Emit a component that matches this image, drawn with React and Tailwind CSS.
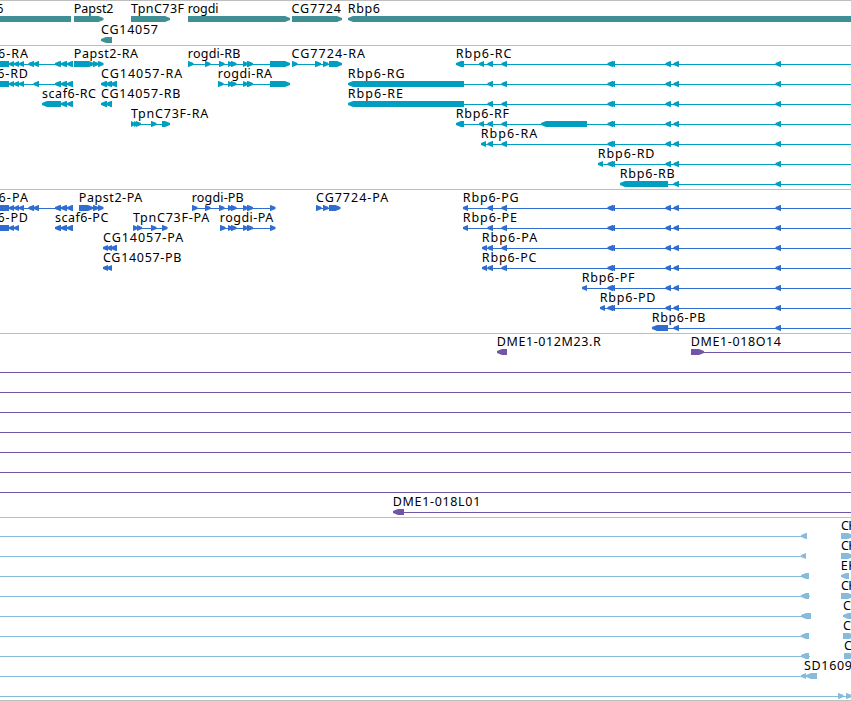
const GENE = "#3f8f95";
const TRANSCRIPT = "#009fc1";
const PROTEIN = "#2f6dd0";
const BAC = "#7355a7";
const CDNA = "#87bbdc";

const L = "left";
const R = "right";

// exons shared by the long Rbp6 isoforms, 3' to 5'
const RBP6_FAR = [[775.5, 781]];
const RBP6_DISTAL = [[673.5, 679], ...RBP6_FAR];
const RBP6_MID = [[607.5, 613], [609.5, 615], [665.5, 671], ...RBP6_DISTAL];
const RBP6_CORE = [[487.5, 493], [501.5, 507], ...RBP6_MID];
const ROGDI = [[228, 233], [231, 236.5], [243, 248], [247, 253]];
const SCAF6_END = [[55, 61], [61, 67], [67, 73]];

/* ================= TRACK DATA ================= */
// feature: name, label x, label end, direction, exons, [line start, line end]
const f = (name, x, end, dir, exons, line) => ({ name, x, end, dir, exons, line });

const tracks = [
  {
    id: "gene",
    color: GENE,
    height: "h-[45px]",
    pitch: 21,
    rows: [
      [
        f("scaf6", -31, 3.5, null, [[-10, 71]]),
        f("Papst2", 73.8, 113.5, R, [[74, 103.5]]),
        f("TpnC73F", 131, 184, R, [[131, 170]]),
        f("rogdi", 187.8, 218.5, R, [[188, 290]]),
        f("CG7724", 291.5, 341, R, [[292, 342]]),
        f("Rbp6", 347.8, 380, L, [[348, 870]]),
      ],
      [f("CG14057", 101, 158, L, [[101, 112]])],
    ],
  },
  {
    id: "transcript",
    color: TRANSCRIPT,
    height: "h-[144px]",
    pitch: 20,
    rows: [
      [
        f("scaf6-RA", -29.5, 28, L, [[-10, 9], [9, 14], [14, 19], [19, 24], [28.5, 34], [33.5, 39], ...SCAF6_END], [0, 73]),
        f("Papst2-RA", 73.8, 138, R, [[74, 94], [93, 98.5], [98, 103.5]], [74, 103]),
        f("rogdi-RB", 187.8, 240.5, R, [[188, 193.5], [205, 210.5], [219, 224.5], ...ROGDI, [270, 290]], [188, 290]),
        f("CG7724-RA", 291.5, 365, R, [[292, 297.5], [315, 321], [323, 328.5], [329, 342]], [292, 342]),
        f("Rbp6-RC", 455.8, 511.5, L, [[456, 464], [479, 484], ...RBP6_CORE], [456, 851]),
      ],
      [
        f("scaf6-RD", -29.5, 28, L, [[-10, 9], [9, 14], [14, 19], [19, 24], [33.5, 39], ...SCAF6_END], [0, 73]),
        f("CG14057-RA", 101, 182.3, L, [[101, 107], [106, 112], [111, 117]]),
        f("rogdi-RA", 217.8, 272, R, [[218, 223.5], ...ROGDI, [270, 290]], [218, 290]),
        f("Rbp6-RG", 347.8, 404.5, L, [[348, 464], ...RBP6_CORE], [464, 851]),
      ],
      [
        f("scaf6-RC", 42, 96, L, [[42, 61], [61, 67], [67, 73]]),
        f("CG14057-RB", 101, 180.5, L, [[101, 107], [106, 112]]),
        f("Rbp6-RE", 347.8, 403, L, [[348, 464], ...RBP6_CORE], [464, 851]),
      ],
      [
        f("TpnC73F-RA", 131, 208.2, R, [[131, 135], [134, 138], [136, 141], [151, 156.5], [162, 170]], [131, 170]),
        f("Rbp6-RF", 455.8, 509, L, [[456, 464], [479, 484], [541, 587], ...RBP6_CORE], [456, 851]),
      ],
      [f("Rbp6-RA", 480.8, 537.2, L, [[481, 486], ...RBP6_CORE], [481, 851])],
      [f("Rbp6-RD", 597.8, 654.5, L, [[598, 603], ...RBP6_MID], [598, 851])],
      [f("Rbp6-RB", 619.8, 674.7, L, [[620, 668], ...RBP6_DISTAL], [620, 851])],
    ],
  },
  {
    id: "protein",
    color: PROTEIN,
    height: "h-[144px]",
    pitch: 20,
    rows: [
      [
        f("scaf6-PA", -29.5, 28, L, [[-10, 9], [9, 14], [14, 19], [19, 24], [28.5, 34], [33.5, 39], ...SCAF6_END], [0, 73]),
        f("Papst2-PA", 78.8, 142.2, R, [[79, 93], [93, 98.5], [98, 103.5]], [79, 103]),
        f("rogdi-PB", 191.8, 243.7, R, [[192, 197.5], [205, 210.5], [219, 224.5], ...ROGDI, [270, 275.5]], [192, 275]),
        f("CG7724-PA", 316, 388.2, R, [[316, 321.5], [323, 328.5], [329, 340.5]], [316, 340]),
        f("Rbp6-PG", 462.8, 518.7, L, [[463, 468], ...RBP6_CORE], [463, 851]),
      ],
      [
        f("scaf6-PD", -29.5, 28, L, [[-10, 9], [9, 14], [14, 19]], [0, 19]),
        f("scaf6-PC", 55, 108.3, L, SCAF6_END),
        f("TpnC73F-PA", 133, 209.2, R, [[133, 138], [137, 142], [151, 156.5], [162, 167.5]], [133, 167]),
        f("rogdi-PA", 219.8, 273.2, R, [[220, 225.5], ...ROGDI, [270, 275.5]], [220, 275]),
        f("Rbp6-PE", 462.8, 517, L, [[463, 468], ...RBP6_CORE], [463, 851]),
      ],
      [
        f("CG14057-PA", 103, 183.3, L, [[103, 108], [107, 112], [111, 117]]),
        f("Rbp6-PA", 481.8, 537.3, L, [[482, 487], ...RBP6_CORE], [482, 851]),
      ],
      [
        f("CG14057-PB", 103, 181.5, L, [[103, 108], [107, 112]]),
        f("Rbp6-PC", 481.8, 536.5, L, [[482, 487], ...RBP6_CORE], [482, 851]),
      ],
      [f("Rbp6-PF", 581.8, 634.5, L, [[582, 587], ...RBP6_MID], [582, 851])],
      [f("Rbp6-PD", 599.8, 655.5, L, [[600, 605], ...RBP6_MID], [600, 851])],
      [f("Rbp6-PB", 651.8, 705.5, L, [[652, 668], ...RBP6_DISTAL], [652, 851])],
    ],
  },
  {
    id: "bac",
    color: BAC,
    height: "h-[184px]",
    pitch: 20,
    rows: [
      [
        f("DME1-012M23.R", 496.8, 600.7, L, [[497, 507]]),
        f("DME1-018O14", 690.8, 781, R, [[691, 704]], [691, 851]),
      ],
      ...Array.from({ length: 7 }, () => [f("", 0, 0, null, [], [0, 851])]),
      [f("DME1-018L01", 392.8, 480.3, L, [[393, 404]], [393, 851])],
    ],
  },
  {
    id: "cdna",
    color: CDNA,
    height: "h-[183px]",
    pitch: 20,
    rows: [
      [f("", 0, 0, L, [[801, 807]], [0, 806]), f("CK", 841, 856, R, [[841, 853]])],
      [f("", 0, 0, L, [[801, 806]], [0, 805]), f("CK", 841, 856, R, [[841, 853]])],
      [f("", 0, 0, L, [[801, 809]], [0, 808]), f("EK", 840.8, 856, L, [[841, 849]])],
      [f("", 0, 0, L, [[801, 809]], [0, 810]), f("CK", 841, 856, R, [[841, 853]])],
      [f("", 0, 0, L, [[801, 811]], [0, 810]), f("C", 843, 851, L, [[843, 860]])],
      [f("", 0, 0, L, [[801, 809]], [0, 808]), f("C", 843, 851, R, [[843, 854]])],
      [f("", 0, 0, L, [[801, 809]], [0, 810]), f("C", 844, 852, R, [[844, 855]])],
      [f("", 0, 0, L, [[801, 806], [806, 817]], [0, 810]), f("SD1609", 804, 852, null, [])],
      [f("", 0, 0, R, [[838, 843.5], [846, 851.5]], [0, 851])],
    ],
  },
];

/* ================= EXON ================= */
function Exon({ start, end, dir, y }) {
  const head = Math.min(5, end - start);
  const top = y;
  const bottom = y + 6;
  // the tip is blunt, two pixels high
  const tipTop = y + 2;
  const tipBottom = y + 4;
  let points = `${start},${top} ${end},${top} ${end},${bottom} ${start},${bottom}`;
  if (dir === L) {
    points = `${start},${tipTop} ${start + head},${top} ${end},${top} ${end},${bottom} ${start + head},${bottom} ${start},${tipBottom}`;
  } else if (dir === R) {
    points = `${start},${top} ${end - head},${top} ${end},${tipTop} ${end},${tipBottom} ${end - head},${bottom} ${start},${bottom}`;
  }
  return <polygon points={points} />;
}

/* ================= FEATURE ================= */
function Feature({ feature, y }) {
  const { name, x, end, dir, exons, line } = feature;
  return (
    <g>
      {line && <rect x={line[0]} y={y + 19} width={line[1] - line[0]} height="1" />}
      {exons.map(([a, b], i) => (
        <Exon key={i} start={a} end={b} dir={dir} y={y + 16} />
      ))}
      {name && (
        <text x={x} y={y + 13} textLength={end - x} className="fill-black">
          {name}
        </text>
      )}
    </g>
  );
}

function Track({ track }) {
  return (
    <section className={`box-border border-t border-[#bebebe] ${track.height}`}>
      <svg
        width="851"
        height="100%"
        fill={track.color}
        className="-mt-px block overflow-visible font-['Noto_Sans',sans-serif] text-[12.5px]"
      >
        {track.rows.map((row, r) =>
          row.map((feature, i) => (
            <Feature key={`${r}-${i}`} feature={feature} y={r * track.pitch} />
          ))
        )}
      </svg>
    </section>
  );
}

export default function App() {
  return (
    <main className="flex h-[701px] w-[851px] flex-col overflow-hidden border-b border-[#bebebe] bg-white">
      {tracks.map((track) => (
        <Track key={track.id} track={track} />
      ))}
    </main>
  );
}
